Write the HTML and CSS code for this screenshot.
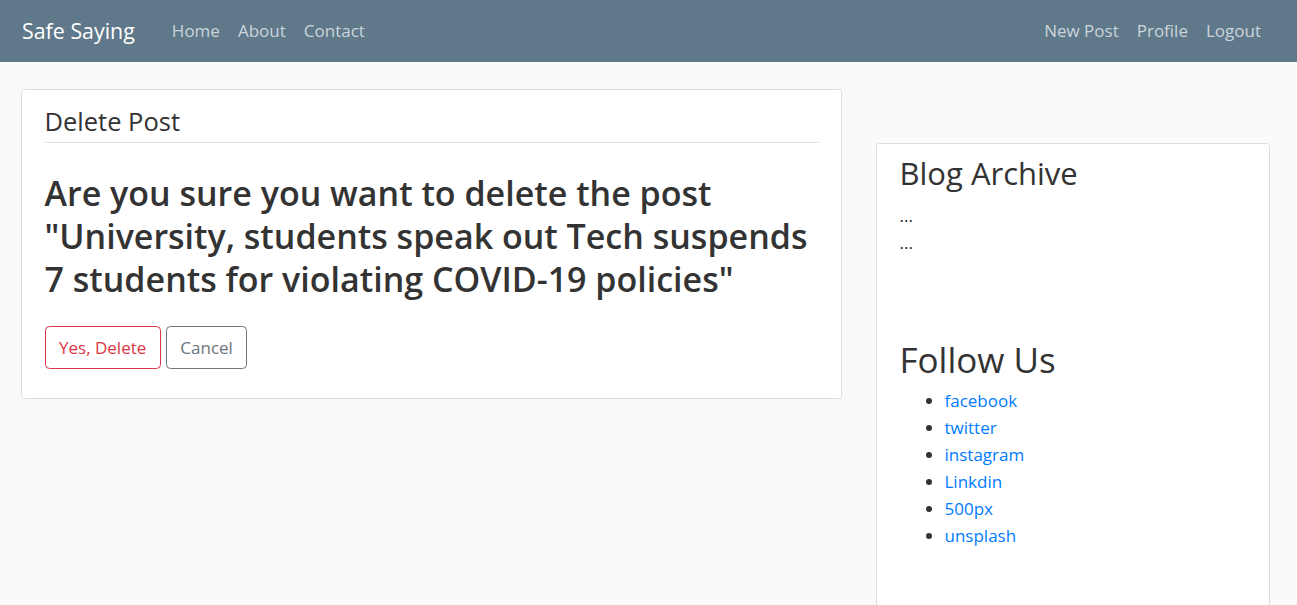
FILE: index.html
```html
<!DOCTYPE html>
<html lang="en">
<head>
<meta charset="utf-8">
<title>Safe Saying - Delete Post</title>
<link rel="stylesheet" href="styles.css">
</head>
<body>
<header class="site-header">
  <nav class="navbar">
    <a class="brand" href="#">Safe Saying</a>
    <div class="nav-group">
      <a class="nav-link" href="#">Home</a>
      <a class="nav-link" href="#">About</a>
      <a class="nav-link" href="#">Contact</a>
    </div>
    <div class="nav-group nav-right">
      <a class="nav-link" href="#">New Post</a>
      <a class="nav-link" href="#">Profile</a>
      <a class="nav-link" href="#">Logout</a>
    </div>
  </nav>
</header>
<main class="layout">
  <div class="col-main">
    <div class="content-section">
      <form class="delete-form">
        <fieldset class="form-group fieldset">
          <legend class="legend">Delete Post</legend>
          <h2 class="confirm">Are you sure you want to delete the post "University, students speak out Tech suspends 7 students for violating COVID-19 policies"</h2>
        </fieldset>
        <div class="form-group actions">
          <button class="btn btn-danger" type="button">Yes, Delete</button>
          <a class="btn btn-secondary" href="#">Cancel</a>
        </div>
      </form>
    </div>
  </div>
  <aside class="col-side">
    <div class="content-section sidebar">
      <h3 class="side-title">Blog Archive</h3>
      <p class="dots">...</p>
      <p class="dots">...</p>
      <h2 class="follow-title">Follow Us</h2>
      <ul class="follow-list">
        <li><a href="#">facebook</a></li>
        <li><a href="#">twitter</a></li>
        <li><a href="#">instagram</a></li>
        <li><a href="#">Linkdin</a></li>
        <li><a href="#">500px</a></li>
        <li><a href="#">unsplash</a></li>
      </ul>
    </div>
  </aside>
</main>
</body>
</html>
```

FILE: styles.css
```css
html, body {
  overflow: hidden;
}

body {
  margin: 0;
  background: #fafafa;
  color: #333333;
  font-family: "Open Sans", "Noto Sans", sans-serif;
  font-size: 17px;
  line-height: 27px;
}

a {
  text-decoration: none;
}

.navbar {
  height: 62px;
  background: #5f788a;
  display: flex;
  align-items: center;
  padding: 0 27px 0 22px;
}

.brand {
  color: #ffffff;
  font-size: 21.4px;
  line-height: 28px;
  margin-right: 28px;
}

.nav-group {
  display: flex;
}

.nav-right {
  margin-left: auto;
}

.nav-link {
  color: #cbd5db;
  font-size: 17px;
  line-height: 24px;
  padding: 0 9px;
}

.layout {
  display: flex;
  align-items: flex-start;
  gap: 34px;
  padding: 27px 27px 0 21px;
}

.col-main {
  width: 821px;
  flex: none;
}

.col-side {
  flex: 1;
  margin-top: 54px;
}

.content-section {
  background: #ffffff;
  border: 1px solid #dddddd;
  border-radius: 3.4px;
  padding: 11.25px 22.5px;
}

.delete-form {
  margin: 0;
}

.fieldset {
  border: 0;
  margin: 0;
  padding: 0;
  min-width: 0;
}

.form-group {
  margin-bottom: 18px;
}

.legend {
  display: block;
  width: 100%;
  padding: 0;
  font-size: 25.5px;
  line-height: 40.5px;
  border-bottom: 1px solid #dee2e6;
  margin-bottom: 29px;
  color: #333333;
}

.confirm {
  font-size: 34px;
  font-weight: 600;
  line-height: 43.2px;
  margin: 0 0 7px;
  color: #333333;
}

.actions {
  display: flex;
  gap: 5px;
}

.btn {
  display: inline-block;
  font-family: inherit;
  font-size: 17px;
  line-height: 27px;
  padding: 6.75px 13.5px;
  border: 1px solid;
  border-radius: 4.5px;
  background: transparent;
  cursor: pointer;
}

.btn-danger {
  color: #dc3545;
  border-color: #dc3545;
}

.btn-secondary {
  color: #6c757d;
  border-color: #6c757d;
}

.sidebar {
  min-height: 520px;
}

.side-title {
  font-size: 31px;
  font-weight: 500;
  line-height: 37.8px;
  margin: 0 0 9px;
}

.dots {
  margin: 0;
  color: #212529;
}

.follow-title {
  font-size: 35px;
  font-weight: 500;
  line-height: 43.2px;
  margin: 82px 0 6px;
}

.follow-list {
  margin: 0;
  padding-left: 45px;
}

.follow-list a {
  color: #007bff;
}
```
